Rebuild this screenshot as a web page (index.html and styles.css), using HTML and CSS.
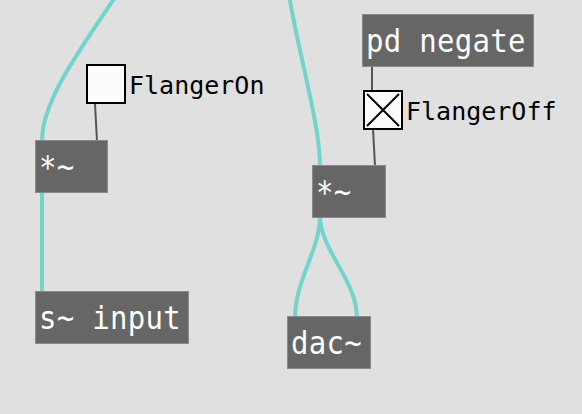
FILE: index.html
```html
<!DOCTYPE html>
<html>
<head>
<meta charset="utf-8">
<link rel="stylesheet" href="styles.css">
</head>
<body>
<div class="canvas">
  <svg class="cords" width="582" height="414" viewBox="0 0 582 414">
    <g class="sig">
      <path d="M 120 -10 C 80 50, 42 100, 42 141"/>
      <path d="M 42 192 L 42 292"/>
      <path d="M 289 -5 C 300 60, 320 125, 320 166"/>
      <path d="M 320 216 C 320 250, 295 280, 295 318"/>
      <path d="M 320 216 C 320 250, 357 280, 357 318"/>
    </g>
    <g class="ctl">
      <path d="M 95 104 L 97 141"/>
      <path d="M 372 66 L 372 91"/>
      <path d="M 373 129 L 375 166"/>
    </g>
  </svg>

  <div class="obj n-mul1 w72"><span class="txt">*~</span></div>
  <div class="obj n-send w153"><span class="txt">s~ input</span></div>
  <div class="obj n-pd w171"><span class="txt">pd negate</span></div>
  <div class="obj n-mul2 w73"><span class="txt">*~</span></div>
  <div class="obj n-dac w83"><span class="txt">dac~</span></div>

  <div class="tgl n-tgl1">
    <div class="tbox"></div>
    <span class="lbl">FlangerOn</span>
  </div>
  <div class="tgl n-tgl2">
    <div class="tbox on">
      <svg width="36" height="36" viewBox="0 0 36 36"><path d="M 2 2 L 34 34 M 34 2 L 2 34"/></svg>
    </div>
    <span class="lbl">FlangerOff</span>
  </div>
</div>
</body>
</html>
```

FILE: styles.css
```css
html, body {
  margin: 0;
  padding: 0;
  background: #e0e0e0;
}

.canvas {
  position: relative;
  width: 582px;
  height: 414px;
  overflow: hidden;
  background: #e0e0e0;
}

.cords {
  position: absolute;
  left: 0;
  top: 0;
}

.sig path {
  fill: none;
  stroke: #72d4cc;
  stroke-width: 4;
}

.ctl path {
  fill: none;
  stroke: #555555;
  stroke-width: 2;
}

.obj {
  position: absolute;
  box-sizing: border-box;
  height: 53px;
  background: #666666;
  border: 1px solid #8a8a8a;
  color: #ffffff;
  font-family: "DejaVu Sans Mono", monospace;
  font-size: 29px;
  letter-spacing: 0.3px;
  line-height: 34px;
  padding: 10px 0 0 3px;
  white-space: pre;
}

.txt {
  display: inline-block;
  transform: scaleY(1.1);
  transform-origin: 0 27px;
}

.w72 { width: 73px; }
.w73 { width: 74px; }
.w83 { width: 84px; }
.w153 { width: 154px; }
.w171 { width: 172px; }

.n-mul1 { left: 35px; top: 140px; }
.n-send { left: 35px; top: 291px; }
.n-pd { left: 362px; top: 14px; }
.n-mul2 { left: 312px; top: 165px; }
.n-dac { left: 287px; top: 316px; }

.tgl {
  position: absolute;
  display: flex;
  align-items: flex-start;
}

.n-tgl1 { left: 86px; top: 64px; }
.n-tgl2 { left: 363px; top: 90px; }

.tbox {
  box-sizing: border-box;
  width: 40px;
  height: 40px;
  border: 2px solid #000000;
  background: #fcfcfc;
  display: flex;
  align-items: center;
  justify-content: center;
}

.tbox svg path {
  stroke: #000000;
  stroke-width: 2;
  fill: none;
}

.lbl {
  margin-left: 3px;
  margin-top: 7px;
  font-family: "DejaVu Sans Mono", monospace;
  font-size: 25px;
  line-height: 30px;
  color: #000000;
  white-space: pre;
}
```
